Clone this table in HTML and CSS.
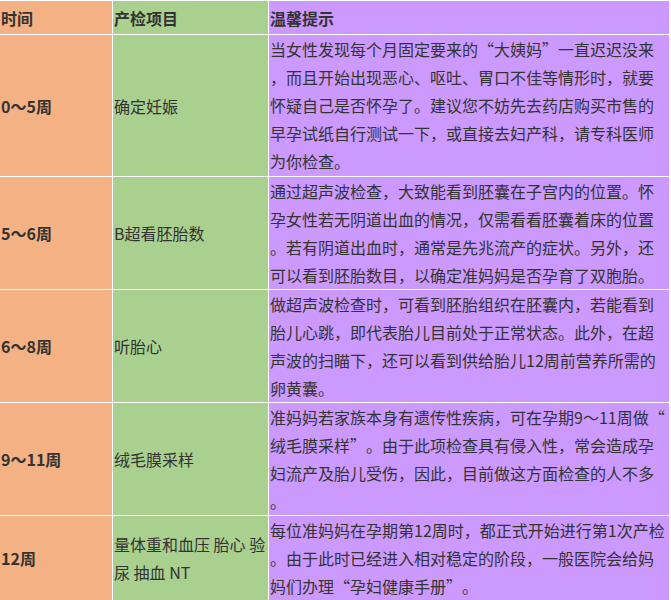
FILE: index.html
```html
<!DOCTYPE html>
<html lang="zh-CN">
<head>
<meta charset="utf-8">
<title>产检时间表</title>
<link rel="stylesheet" href="styles.css">
</head>
<body>
<div class="sheet">
  <div class="cell time head">时间</div>
  <div class="cell item head">产检项目</div>
  <div class="cell tip head">温馨提示</div>

  <div class="cell time">0～5周</div>
  <div class="cell item">确定妊娠</div>
  <div class="cell tip">当女性发现每个月固定要来的<span class="q">“</span>大姨妈<span class="q">”</span>一直迟迟没来，而且开始出现恶心、呕吐、胃口不佳等情形时，就要怀疑自己是否怀孕了。建议您不妨先去药店购买市售的早孕试纸自行测试一下，或直接去妇产科，请专科医师为你检查。</div>

  <div class="cell time">5～6周</div>
  <div class="cell item">B超看胚胎数</div>
  <div class="cell tip">通过超声波检查，大致能看到胚囊在子宫内的位置。怀孕女性若无阴道出血的情况，仅需看看胚囊着床的位置。若有阴道出血时，通常是先兆流产的症状。另外，还可以看到胚胎数目，以确定准妈妈是否孕育了双胞胎。</div>

  <div class="cell time">6～8周</div>
  <div class="cell item">听胎心</div>
  <div class="cell tip">做超声波检查时，可看到胚胎组织在胚囊内，若能看到胎儿心跳，即代表胎儿目前处于正常状态。此外，在超声波的扫瞄下，还可以看到供给胎儿12周前营养所需的卵黄囊。</div>

  <div class="cell time">9～11周</div>
  <div class="cell item">绒毛膜采样</div>
  <div class="cell tip">准妈妈若家族本身有遗传性疾病，可在孕期9～11周做<span class="q">“</span>绒毛膜采样<span class="q">”</span>。由于此项检查具有侵入性，常会造成孕妇流产及胎儿受伤，因此，目前做这方面检查的人不多。</div>

  <div class="cell time">12周</div>
  <div class="cell item">量体重和血压 胎心 验尿 抽血 NT</div>
  <div class="cell tip">每位准妈妈在孕期第12周时，都正式开始进行第1次产检。由于此时已经进入相对稳定的阶段，一般医院会给妈妈们办理<span class="q">“</span>孕妇健康手册<span class="q">”</span>。</div>
</div>
</body>
</html>
```

FILE: styles.css
```css
html, body {
  margin: 0;
  padding: 0;
  overflow: hidden;
  background: #ffffff;
}

body {
  font-family: "Noto Sans CJK SC", "Noto Sans", sans-serif;
  font-size: 16px;
  color: #333333;
}

.sheet {
  width: 670px;
  box-sizing: border-box;
  padding: 1px 1px 0 0;
  display: grid;
  grid-template-columns: 112px 155px 400px;
  grid-template-rows: 33px 141px 112px 112px 112px 84px;
  gap: 1px;
  background: #ffffff;
}

.cell {
  line-height: 28px;
  padding-left: 1px;
  display: flex;
  align-items: center;
  line-break: anywhere;
  text-spacing-trim: space-all;
}

.time {
  background: #f4b183;
  font-weight: bold;
}

.item {
  background: #a9d08e;
}

.tip {
  background: #cc99ff;
  display: block;
}

.head {
  display: flex;
  align-items: center;
  font-weight: bold;
}

.q {
  font-variant-east-asian: full-width;
}
```
